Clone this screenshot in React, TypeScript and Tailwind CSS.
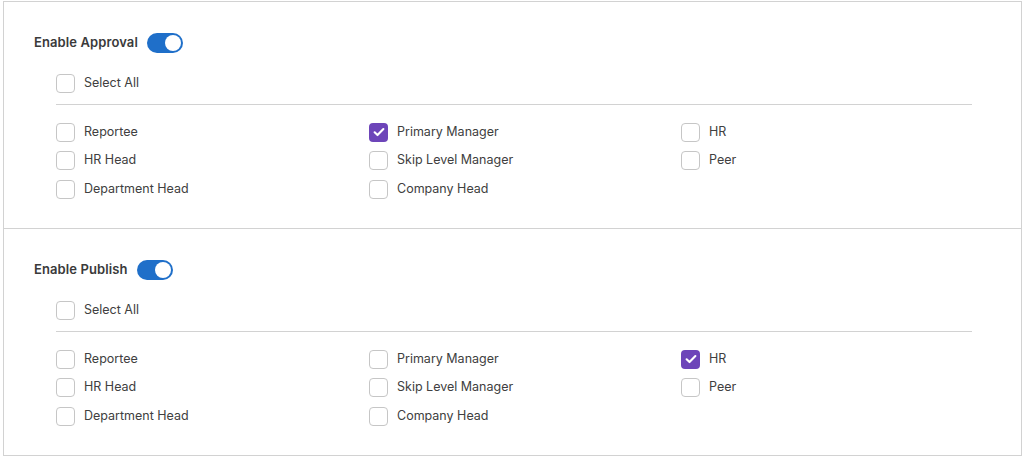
import React, { useState } from 'react';

type Option = { key: string; label: string };

const OPTIONS: Option[] = [
  { key: 'reportee', label: 'Reportee' },
  { key: 'primaryManager', label: 'Primary Manager' },
  { key: 'hr', label: 'HR' },
  { key: 'hrHead', label: 'HR Head' },
  { key: 'skipLevel', label: 'Skip Level Manager' },
  { key: 'peer', label: 'Peer' },
  { key: 'deptHead', label: 'Department Head' },
  { key: 'companyHead', label: 'Company Head' },
];

const Checkbox: React.FC<{ checked: boolean; label: string; onChange: () => void }> = ({ checked, label, onChange }) => (
  <label className="flex items-center gap-[9px] h-[20px] cursor-pointer select-none">
    <span
      onClick={onChange}
      className={
        checked
          ? 'w-[19px] h-[19px] rounded-[4px] bg-[#6d45b9] flex items-center justify-center'
          : 'w-[19px] h-[19px] rounded-[4px] border border-[#c6c6c6] bg-white'
      }
    >
      {checked && (
        <svg viewBox="0 0 16 16" className="w-[14px] h-[14px]" fill="none" stroke="white" strokeWidth="2.4" strokeLinecap="round" strokeLinejoin="round">
          <path d="M3 8.3l3.3 3.2L13 4.6" />
        </svg>
      )}
    </span>
    <span className="text-[12.5px] text-[#404040]">{label}</span>
  </label>
);

const Toggle: React.FC<{ on: boolean; onToggle: () => void }> = ({ on, onToggle }) => (
  <button
    onClick={onToggle}
    className={`w-[36px] h-[20px] rounded-full flex items-center px-[2px] ${on ? 'bg-[#1f6fc9] justify-end' : 'bg-[#c4c4c4] justify-start'}`}
  >
    <span className="w-[16px] h-[16px] rounded-full bg-white" />
  </button>
);

const RoleSection: React.FC<{ title: string; initial: string[]; last?: boolean }> = ({ title, initial, last }) => {
  const [enabled, setEnabled] = useState(true);
  const [selected, setSelected] = useState<string[]>(initial);
  const allSelected = selected.length === OPTIONS.length;

  const toggle = (key: string) =>
    setSelected((s) => (s.includes(key) ? s.filter((k) => k !== key) : [...s, key]));

  return (
    <section className={`pl-[30px] pt-[31px] pb-[29px] ${last ? '' : 'border-b border-[#d2d2d2]'}`}>
      <div className="flex items-center gap-[9px] h-[20px]">
        <span className="text-[13px] font-semibold tracking-[0.1px] text-[#3a3a3a]">{title}</span>
        <Toggle on={enabled} onToggle={() => setEnabled(!enabled)} />
      </div>
      <div className="ml-[22px] mt-[20px] w-[916px]">
        <Checkbox
          checked={allSelected}
          label="Select All"
          onChange={() => setSelected(allSelected ? [] : OPTIONS.map((o) => o.key))}
        />
        <div className="border-t border-[#d2d2d2] mt-[11px] pt-[17px] grid grid-cols-[313px_312px_1fr] gap-y-[8.5px]">
          {OPTIONS.map((o) => (
            <Checkbox key={o.key} checked={selected.includes(o.key)} label={o.label} onChange={() => toggle(o.key)} />
          ))}
        </div>
      </div>
    </section>
  );
};

export default function App() {
  return (
    <div className="min-h-screen bg-white pl-[3px] pr-[2px] pt-[1px]" style={{ fontFamily: 'Inter, "Noto Sans", sans-serif' }}>
      <div className="border border-[#d2d2d2]">
        <RoleSection title="Enable Approval" initial={['primaryManager']} />
        <RoleSection title="Enable Publish" initial={['hr']} last />
      </div>
    </div>
  );
}
